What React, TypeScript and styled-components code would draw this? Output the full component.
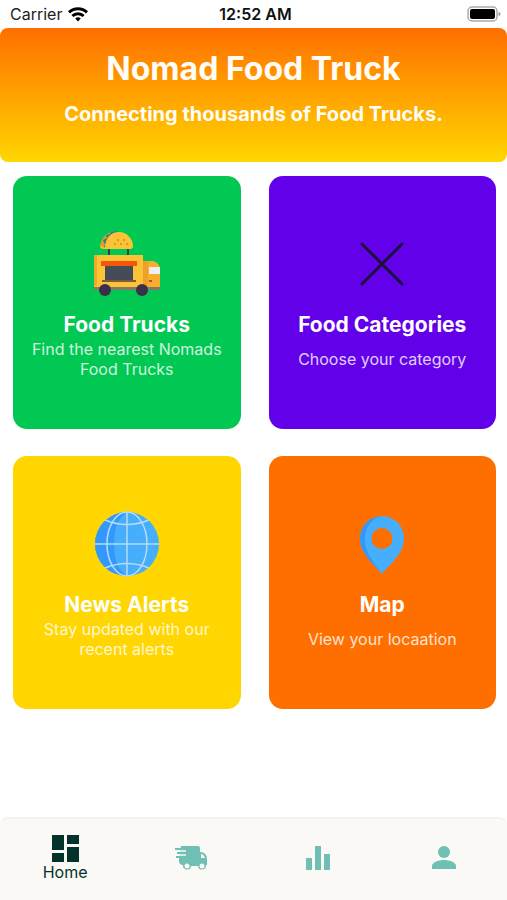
import React from "react";
import styled, { createGlobalStyle } from "styled-components";

const GlobalStyle = createGlobalStyle`
  * { box-sizing: border-box; }
  body {
    margin: 0;
    background: #ffffff;
    font-family: Inter, "Liberation Sans", sans-serif;
  }
  h1, h2, p { margin: 0; }
`;

const Screen = styled.div`
  display: flex;
  flex-direction: column;
  min-height: 100vh;
`;

const StatusBar = styled.div`
  display: grid;
  grid-template-columns: 1fr auto 1fr;
  align-items: center;
  height: 28px;
  padding: 0 6px 0 10px;
  font-size: 16px;
  line-height: 20px;
  color: #222222;
`;

const Carrier = styled.div`
  display: flex;
  align-items: center;
  gap: 6px;
`;

const Clock = styled.time`
  font-weight: 600;
  color: #111111;
`;

const Battery = styled.svg`
  justify-self: end;
`;

const Header = styled.header`
  display: flex;
  flex-direction: column;
  align-items: center;
  gap: 12px;
  height: 134px;
  padding-top: 21px;
  border-radius: 8px;
  background: linear-gradient(#ff6f00, #ffd600);
  color: #fffdf5;
  text-align: center;
`;

const Title = styled.h1`
  font-size: 32px;
  line-height: 40px;
  font-weight: 700;
`;

const Tagline = styled.p`
  font-size: 20px;
  line-height: 26px;
  font-weight: 700;
`;

const CardGrid = styled.main`
  display: grid;
  grid-template-columns: repeat(2, 1fr);
  gap: 27px 28px;
  padding: 14px 11px 28px 13px;
`;

const Card = styled.button<{ $color: string }>`
  display: flex;
  flex-direction: column;
  align-items: center;
  justify-content: center;
  min-height: 253px;
  padding: 4px 16px 0;
  border: 0;
  border-radius: 14px;
  background: ${(p) => p.$color};
  color: #ffffff;
  font-family: inherit;
  text-align: center;
  cursor: pointer;
`;

const CardTitle = styled.h2`
  margin-top: 14px;
  font-size: 21px;
  line-height: 28px;
  font-weight: 700;
`;

const CardText = styled.p`
  display: flex;
  align-items: center;
  min-height: 40px;
  font-size: 16px;
  line-height: 20px;
  opacity: 0.8;
`;

const TabBar = styled.nav`
  display: grid;
  grid-template-columns: repeat(4, 1fr);
  height: 83px;
  margin-top: auto;
  padding: 0 0 4px 2px;
  border-top: 2px solid #f3f3f1;
  border-radius: 8px 8px 0 0;
  background: #faf9f6;
`;

const Tab = styled.button<{ $active?: boolean }>`
  display: flex;
  flex-direction: column;
  align-items: center;
  justify-content: center;
  padding: 0;
  border: 0;
  background: none;
  color: ${(p) => (p.$active ? "#04332c" : "#6fbfb5")};
  font-family: inherit;
  font-size: 16px;
  line-height: 20px;
  cursor: pointer;
`;

const WifiIcon = () => (
  <svg width="20" height="15" viewBox="0 0 20 15" fill="none" stroke="#000" strokeWidth="3" aria-hidden="true">
    <path d="M1 5.4a13 13 0 0 1 18 0" />
    <path d="M4.4 9a8 8 0 0 1 11.2 0" />
    <path d="M10 14.4 7.2 11.6a4 4 0 0 1 5.6 0z" fill="#000" stroke="none" />
  </svg>
);

const BatteryIcon = () => (
  <Battery width="34" height="16" viewBox="0 0 34 16" aria-label="Battery full">
    <rect x="1" y="1" width="29" height="14" rx="4" fill="#fff" stroke="#aaa" strokeWidth="1.5" />
    <rect x="3" y="3" width="25" height="10" rx="2" fill="#000" />
    <path d="M31.5 6v4a2 2 0 0 0 0-4z" fill="#999" />
  </Battery>
);

const FoodTruckIcon = () => (
  <svg width="68" height="66" viewBox="0 0 68 66" aria-hidden="true">
    <path d="M16 18v6M35 18v6" stroke="#394049" strokeWidth="2" />
    <path d="M7 15C8 8 13 1 21 1l5 2-10 15H9q-2-1-2-3z" fill="#e39d25" />
    <path d="M12 14 10 9l4-2-1-3 4-1 1-2 7-1 1 4-12 13-3-1z" fill="#347f86" />
    <path d="M12 17C12 7 18 1 26 1s14 7 14 14q0 3-3 3H12q-5 0-5-4 2 2 5 3z" fill="#fbc335" />
    <path d="M21 13h2M27 13h2M33 13h2M24 9h2M30 9h2" stroke="#d58a1e" strokeWidth="1.5" />
    <path d="M1 24h49v33H1z" fill="#fbc335" />
    <path d="M1 24h3v31H1z" fill="#f2a72d" />
    <path d="M50 30h10q7 2 7 9v18H50z" fill="#f9ad2e" />
    <path d="M50 30h5v27h-5z" fill="#eea02a" />
    <path d="M56 36h11v7H56z" fill="#f1eff4" />
    <path d="M56 49h3v2h-3z" fill="#a45a30" />
    <path d="M8 30h36v5H8z" fill="#f4560c" />
    <path d="M12 35h28v14H12z" fill="#454b57" />
    <path d="M9 49h34v2H9z" fill="#7d5b3c" />
    <path d="M1 56h66v3H1z" fill="#84786a" />
    <circle cx="12" cy="59" r="6" fill="#3a304b" />
    <circle cx="49" cy="59" r="6" fill="#3a304b" />
  </svg>
);

const CrossIcon = () => (
  <svg width="66" height="66" viewBox="0 0 66 66" fill="none" stroke="#1c103f" strokeWidth="3" strokeLinecap="round" aria-hidden="true">
    <path d="m13 13 40 40M53 13 13 53" />
  </svg>
);

const GlobeIcon = () => (
  <svg width="66" height="66" viewBox="0 0 66 66" aria-hidden="true">
    <circle cx="33" cy="33" r="32" fill="#46aefb" />
    <path d="M33 1a32 32 0 0 0 0 64c-9-5-13-17-13-32S24 6 33 1z" fill="#3398fa" />
    <g fill="none" stroke="#b4dcfb" strokeWidth="1.5">
      <path d="M1 33h64M33 1v64" />
      <ellipse cx="33" cy="33" rx="20" ry="32" />
      <path d="M11 9q22 9 44 0M11 57q22-9 44 0" />
    </g>
  </svg>
);

const PinIcon = () => (
  <svg width="66" height="66" viewBox="0 0 66 66" aria-hidden="true">
    <path fillRule="evenodd" d="M33 5a22 22 0 0 1 22 22c0 16-14 26-22 36-8-10-22-20-22-36A22 22 0 0 1 33 5zm0 12a10 10 0 1 0 0 21 10 10 0 0 0 0-21z" fill="#46aefb" />
    <path d="M33 5a22 22 0 0 0-22 22c0 16 14 26 22 36-7-11-17-19-17-36C16 15 24 7 33 5z" fill="#3398fa" />
  </svg>
);

const DashboardIcon = () => (
  <svg width="28" height="28" viewBox="0 0 28 28" fill="currentColor" aria-hidden="true">
    <path d="M1 1h12v15H1zM16 1h12v9H16zM1 19h12v9H1zM16 13h12v15H16z" />
  </svg>
);

const FastTruckIcon = () => (
  <svg width="34" height="26" viewBox="0 0 34 26" aria-hidden="true">
    <path d="M7 1h17q2 0 2 2v4h1q6 1 6 7v6h-1a4 4 0 0 1-8 1h-7a4 4 0 0 1-8-1q-4 0-4-4v-3z" fill="currentColor" />
    <path d="M1 4h12M3 8h10M2 12h9" stroke="currentColor" strokeWidth="2" />
    <path d="M0 6h12M2 10h10" stroke="#faf9f6" strokeWidth="1.5" />
    <path d="M27 9h1q2 1 3 4h-4z" fill="#faf9f6" />
    <circle cx="13" cy="21" r="2.5" fill="#faf9f6" />
    <circle cx="28" cy="21" r="2.5" fill="#faf9f6" />
  </svg>
);

const ChartIcon = () => (
  <svg width="26" height="26" viewBox="0 0 26 26" fill="currentColor" aria-hidden="true">
    <path d="M1 13h6v12H1zM10 1h6v24h-6zM19 9h6v16h-6z" />
  </svg>
);

const PersonIcon = () => (
  <svg width="26" height="26" viewBox="0 0 26 26" fill="currentColor" aria-hidden="true">
    <circle cx="13" cy="7" r="6" />
    <path d="M1 24v-3c0-4 7-6 12-6s12 2 12 6v3z" />
  </svg>
);

const cards = [
  { title: "Food Trucks", text: "Find the nearest Nomads Food Trucks", color: "#00c853", Icon: FoodTruckIcon },
  { title: "Food Categories", text: "Choose your category", color: "#6200ea", Icon: CrossIcon },
  { title: "News Alerts", text: "Stay updated with our recent alerts", color: "#ffd600", Icon: GlobeIcon },
  { title: "Map", text: "View your locaation", color: "#ff6f00", Icon: PinIcon },
];

export default function App() {
  return (
    <Screen>
      <GlobalStyle />
      <StatusBar>
        <Carrier>
          Carrier
          <WifiIcon />
        </Carrier>
        <Clock>12:52 AM</Clock>
        <BatteryIcon />
      </StatusBar>
      <Header>
        <Title>Nomad Food Truck</Title>
        <Tagline>Connecting thousands of Food Trucks.</Tagline>
      </Header>
      <CardGrid>
        {cards.map(({ title, text, color, Icon }) => (
          <Card key={title} $color={color}>
            <Icon />
            <CardTitle>{title}</CardTitle>
            <CardText>{text}</CardText>
          </Card>
        ))}
      </CardGrid>
      <TabBar>
        <Tab $active aria-current="page">
          <DashboardIcon />
          Home
        </Tab>
        <Tab aria-label="Trucks"><FastTruckIcon /></Tab>
        <Tab aria-label="Statistics"><ChartIcon /></Tab>
        <Tab aria-label="Profile"><PersonIcon /></Tab>
      </TabBar>
    </Screen>
  );
}
